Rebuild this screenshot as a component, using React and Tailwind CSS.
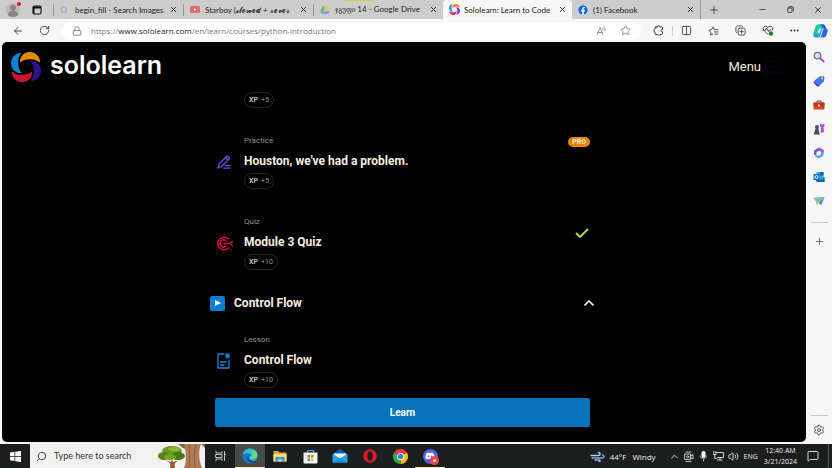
import React from "react";
import {
  ArrowLeft, RotateCw, Lock, Star, X, Plus, Minus, Search, Settings,
  ChevronUp, MessageSquare, Columns2, Volume2, Ellipsis,
} from "lucide-react";
import { FaFacebook, FaDiscord } from "react-icons/fa";

/* ---------- logos ---------- */

const SWIRL = "M9 10.8C8.6 4.5 13 0 18.6 0 25 0 29.4 5 29 10.6 26 7.8 22.6 6.900 18.4 7.200 14 7.300 11 8.600 9 10.8Z";

function SololearnMark({ className, colors }) {
  return (
    <svg viewBox="0 0 30 30" className={className} aria-hidden="true">
      <path d={SWIRL} fill={colors[0]} />
      <path d={SWIRL} fill={colors[1]} transform="rotate(90 15 15)" />
      <path d={SWIRL} fill={colors[2]} transform="rotate(180 15 15)" />
      <path d={SWIRL} fill={colors[3]} transform="rotate(270 15 15)" />
    </svg>
  );
}

function DriveLogo() {
  return (
    <svg viewBox="0 0 24 22" className="h-[9px] w-[10px] opacity-60" aria-hidden="true">
      <path d="M8 1h8l8 14h-8z" fill="#fbbc04" />
      <path d="M8 1l4 7L4 22l-4-7z" fill="#34a853" />
      <path d="M8 15h16l-4 7H4z" fill="#4285f4" />
    </svg>
  );
}

function YoutubeLogo() {
  return (
    <svg viewBox="0 0 20 14" className="h-[7px] w-[10px]" aria-hidden="true">
      <rect width="20" height="14" rx="3" fill="#e56a6a" />
      <path d="M8 4l5 3-5 3z" fill="#fff" />
    </svg>
  );
}

function EdgeLogo() {
  return (
    <svg viewBox="0 0 32 32" className="size-4" aria-hidden="true">
      <defs>
        <linearGradient id="edgeTop" x1="0" y1="0" x2="1" y2="0.4">
          <stop offset="0" stopColor="#28a8e8" />
          <stop offset="0.6" stopColor="#35c7c0" />
          <stop offset="1" stopColor="#6ee06a" />
        </linearGradient>
      </defs>
      <circle cx="16" cy="16" r="15" fill="#1678cf" />
      <path d="M1 15C2 6 8 1 16 1c9 0 15 6 15 13 0 5-4 8-9 8-4 0-5-2-4-3 2-2 2-7-4-8C8 10 3 12 1 15z" fill="url(#edgeTop)" />
      <path d="M13 14c-5 4-3 12 3 15 5 2 10 0 13-5-5 3-13 2-15-3-1-3 0-5-1-7z" fill="#0c4f97" />
      <path d="M19 18c-1 4 5 6 10 4l-1 2c-6 3-13 1-14-4 0-3 2-5 4-5 1 1 1 2 1 3z" fill="#dff2ff" fillOpacity="0.35" />
    </svg>
  );
}

function CopilotLogo() {
  return (
    <svg viewBox="0 0 30 28" className="h-[14px] w-[15px]" aria-hidden="true">
      <path d="M11 1h9c3 0 4 2 5 5l1 3h-7l-4 14c-1 3-3 4-5 4H6c-5 0-6-4-5-8l4-13c1-3 3-5 6-5z" fill="#17a9c9" />
      <path d="M11 1h9c2 0 3 1 4 3l-6 2-5 12-8 2-3-4 3-10c1-3 3-5 6-5z" fill="#25c7ad" />
      <path d="M22 8h3c4 0 5 4 4 8l-3 8c-1 2-3 3-5 3h-8c2 0 3-2 4-4l3-11c1-2 1-4 2-4z" fill="#2f64e8" />
      <path d="M12 9h4l-3 10h-4z" fill="#fff" fillOpacity="0.85" />
      <path d="M13 1h7c3 0 4 2 5 5l1 2h-4c-2 0-3-2-4-4z" fill="#1460c8" />
    </svg>
  );
}

/* ---------- browser toolbar icons ---------- */

const stroke = { fill: "none", stroke: "currentColor", strokeLinecap: "round", strokeLinejoin: "round" };

function ReadAloudIcon() {
  return (
    <svg viewBox="0 0 22 20" className="h-[10px] w-[11px]" strokeWidth="1.6" {...stroke} aria-hidden="true">
      <path d="M2 18L8 3l6 15M4 13h8M13 4c1 1 1.500 2.500 1 4M16 1.500c2 2 2.500 5 1.500 8" />
    </svg>
  );
}
function ExtensionsIcon() {
  return (
    <svg viewBox="0 0 22 22" className="size-[11px]" strokeWidth="1.900" {...stroke} aria-hidden="true">
      <path d="M6 4h3c0-3.500 5-3.500 5 0h3c1.500 0 2 .5 2 2v3c-4-.5-4 5 0 4.500v3.500c0 1.500-.5 2-2 2h-3c0 2-5 2-5 0H6c-1.500 0-2-.5-2-2v-3c-3.500 0-3.500-5 0-5V6c0-1.500.5-2 2-2z" />
    </svg>
  );
}
function FavoritesIcon() {
  return (
    <svg viewBox="0 0 24 22" className="h-[10px] w-[11px]" strokeWidth="1.800" {...stroke} aria-hidden="true">
      <path d="M14 8l-3-6-3 6-6 1 4.500 5L5.500 20l5-2.500M15 8h7M14 13h8M15 18h7" />
    </svg>
  );
}
function CollectionsIcon() {
  return (
    <svg viewBox="0 0 24 24" className="size-[11px]" strokeWidth="1.800" {...stroke} aria-hidden="true">
      <rect x="7" y="7" width="15" height="15" rx="3" />
      <path d="M4 17c-2-1-2-2-2-4V7c0-3 2-5 5-5h6c2 0 3 0 4 2M14.500 11v7M11 14.500h7" />
    </svg>
  );
}
function HealthIcon() {
  return (
    <svg viewBox="0 0 24 22" className="h-[11px] w-3" strokeWidth="1.800" {...stroke} aria-hidden="true">
      <path d="M12 19l-9-9c-3-5 4-11 9-5 5-6 12 0 9 5M2 10h5l2-4 4 7 2-3h3" />
      <circle cx="18" cy="17" r="4.500" fill="#1c8a2c" stroke="none" />
    </svg>
  );
}
function RestoreIcon() {
  return (
    <svg viewBox="0 0 16 16" className="size-[7px]" strokeWidth="1.800" {...stroke} aria-hidden="true">
      <rect x="1.500" y="4.500" width="10" height="10" rx="2" />
      <path d="M5 1.500h6.500a3 3 0 0 1 3 3V11" />
    </svg>
  );
}

/* ---------- sidebar icons ---------- */

const sideIcons = [
  ["Search", <svg viewBox="0 0 24 24" className="size-3"><circle cx="9" cy="9" r="6.500" fill="#c9e4f5" stroke="#6b7580" strokeWidth="2.500" /><path d="M14 14l7 7" stroke="#b13ee0" strokeWidth="4" strokeLinecap="round" /></svg>],
  ["Shopping", <svg viewBox="0 0 24 24" className="size-3"><path d="M13 3l8-1 2 3-1 8-10 9c-1 1-3 1-4 0l-6-6c-1-1-1-3 0-4z" fill="#4a72ee" /><path d="M3 15l10 6-1 1c-1 1-3 1-4 0l-6-6z" fill="#2b3fc0" /><circle cx="18" cy="6.500" r="2" fill="#ffd34a" /></svg>],
  ["Tools", <svg viewBox="0 0 24 24" className="size-3"><path d="M8 7V4h8v3" fill="none" stroke="#7a3b22" strokeWidth="2" /><rect x="1" y="7" width="22" height="14" rx="2" fill="#d2461f" /><path d="M1 13h22v-4c0-1-1-2-2-2H3c-1 0-2 1-2 2z" fill="#b5391d" /><rect x="10" y="11" width="4" height="4" fill="#ffd9b0" /></svg>],
  ["Games", <svg viewBox="0 0 24 24" className="size-3"><path d="M14 2h3v2h2V2h4v4l-2 2 1 11h-7l1-11-2-2z" fill="#b44be8" /><circle cx="8" cy="8" r="4" fill="#555" /><path d="M5 11h6l1 7 2 5H1l2-5z" fill="#4a4a4a" /></svg>],
  ["Microsoft 365", <svg viewBox="0 0 24 24" className="size-3"><path d="M12 1l9 5v6l-6-3-3-2-5 3v8l-5-3V7z" fill="#5b63d8" /><path d="M21 6v11l-9 6-9-5 9-1 4-3V9z" fill="#4aa3e8" /><path d="M12 1l9 5v5l-7-3-7 3z" fill="#9a5fdc" /><circle cx="12" cy="12" r="4" fill="#f2f4ff" /></svg>],
  ["Outlook", <svg viewBox="0 0 24 24" className="size-3"><path d="M7 2h14v9l2 2v9H7z" fill="#2fa8ea" /><path d="M14 2h7v7h-7zM7 13l8 5 8-5v9H7z" fill="#1266b8" /><rect x="1" y="6" width="12" height="12" rx="1" fill="#0b6fc8" /><circle cx="7" cy="12" r="3" fill="none" stroke="#fff" strokeWidth="2" /></svg>],
  ["Drop", <svg viewBox="0 0 24 24" className="size-3"><path d="M1 6l22-2-6 16-6-4-3 4-1-7z" fill="#2b9be6" /><path d="M1 6l22-2L7 13z" fill="#67c3f5" /><path d="M7 13L23 4 11 16l-3 4z" fill="#f2b530" /></svg>],
];

/* ---------- course icons ---------- */

function PracticeIcon() {
  return (
    <svg viewBox="0 0 28 28" className="size-[14px] text-[#7a4be0]" strokeWidth="2.500" {...stroke} aria-hidden="true">
      <path d="M2 26l2-8L19 3c1-1 2-1 3 0l2 2c1 1 1 2 0 3L9 23zM17 5l5 5M16 21h10M13 26h13" />
    </svg>
  );
}
function QuizIcon() {
  return (
    <svg viewBox="0 0 32 30" className="h-[15px] w-4 text-[#e0004f]" strokeWidth="2.800" {...stroke} aria-hidden="true">
      <path d="M23 6a12.500 12.500 0 1 0 0 18M18 10a7 7 0 1 0 0 10M14 15h12M31 11l-5 4 5 4" />
    </svg>
  );
}
function LessonIcon() {
  return (
    <svg viewBox="0 0 26 32" className="h-4 w-[13px] text-[#1489dc]" strokeWidth="2.600" {...stroke} aria-hidden="true">
      <path d="M14 2H2v28h22V15M7 18h11M7 24h7" />
      <path d="M17 1h8v11l-4-3-4 3z" fill="currentColor" stroke="none" />
    </svg>
  );
}

/* ---------- browser chrome ---------- */

function Tab({ icon, title, active, last }) {
  return (
    <div
      className={
        "flex h-full min-w-0 max-w-[129px] flex-1 items-center pl-[6px] " +
        (active ? "rounded-t-[4px] bg-[#f7f7f7]" : last ? "border-r border-[#999]" : "")
      }
    >
      <span className="flex w-[15px] shrink-0 items-center">{icon}</span>
      <span className="min-w-0 flex-1 overflow-hidden whitespace-nowrap font-['Lato','DejaVu_Sans',sans-serif] text-[8px] leading-3 text-[#222]">
        {title}
      </span>
      <button aria-label="Close tab" className="flex w-[19px] shrink-0 justify-center text-[#222]">
        <X className="size-[9px]" strokeWidth={2.4} />
      </button>
    </div>
  );
}

function Divider() {
  return <span className="h-3 w-px shrink-0 bg-[#999]" />;
}

function TabStrip() {
  return (
    <div className="relative flex h-[19px] shrink-0 items-center bg-[#cdcdcd]">
      <button aria-label="Profile" className="relative flex w-[26px] justify-center">
        <svg viewBox="0 0 24 24" className="size-[14px]" aria-hidden="true">
          <circle cx="12" cy="12" r="12" fill="#bdb9b6" />
          <circle cx="12" cy="8" r="5" fill="#8b8480" />
          <path d="M3 20c1-9 17-9 18 0-4 5-14 5-18 0z" fill="#8b8480" />
        </svg>
        <span className="absolute -top-px right-[5px] size-1 rounded-full bg-[#e3151f]" />
      </button>
      <button aria-label="Tab actions" className="flex w-[22px] justify-center text-[#111]">
        <svg viewBox="0 0 20 20" className="size-[10px]" aria-hidden="true">
          <rect x="2" y="2" width="16" height="16" rx="2.500" fill="none" stroke="currentColor" strokeWidth="2.200" />
          <path d="M2 3h16v4H2zM2 7h3v10H2z" fill="currentColor" />
        </svg>
      </button>
      <span className="w-[5px]" />
      <Divider />
      <div className="flex h-full min-w-0 max-w-[647px] flex-1 items-center">
        <Tab icon={<Search className="size-[8px] text-[#6fa8d8]" strokeWidth={2.4} />} title="begin_fill - Search Images" />
        <Divider />
        <Tab icon={<YoutubeLogo />} title={<>Starboy (<span>𝓼𝓵𝓸𝔀𝓮𝓭 + 𝓻𝓮𝓿𝓮𝓻</span></>} />
        <Divider />
        <div className="relative flex h-full min-w-0 max-w-[129px] flex-1">
          <span className="absolute left-[30px] top-0 h-px w-[29px] bg-[#d8cc5c]" />
          <Tab icon={<DriveLogo />} title={<><span lang="ka" className="font-['DejaVu_Sans'] text-[7px]">ჯგუფი</span> 14 - Google Drive</>} />
        </div>
        <Tab active icon={<SololearnMark className="size-[11px]" colors={["#ff7a1a", "#7b2ff0", "#ec1c6b", "#1a9df0"]} />} title="Sololearn: Learn to Code" />
        <Tab last icon={<FaFacebook className="size-[10px] rounded-full bg-white text-[#0866ff]" />} title="(1) Facebook" />
      </div>
      <button aria-label="New tab" className="flex w-[26px] justify-center text-[#333]"><Plus className="size-3" strokeWidth={1.6} /></button>
      <div className="ml-auto flex text-[#222]">
        <button aria-label="Minimize" className="flex w-7 items-center justify-center"><Minus className="size-[9px]" /></button>
        <button aria-label="Restore" className="flex w-7 items-center justify-center"><RestoreIcon /></button>
        <button aria-label="Close" className="flex w-7 items-center justify-center"><X className="size-[10px]" /></button>
      </div>
    </div>
  );
}

function ToolButton({ label, children }) {
  return (
    <button aria-label={label} className="flex w-[27px] shrink-0 items-center justify-center text-[#333]">
      {children}
    </button>
  );
}

function Toolbar() {
  return (
    <div className="flex h-[23px] shrink-0 items-center bg-[#f7f7f7] pl-1">
      <ToolButton label="Back"><ArrowLeft className="size-3" strokeWidth={1.8} /></ToolButton>
      <ToolButton label="Refresh"><RotateCw className="size-[11px]" strokeWidth={1.8} /></ToolButton>
      <div className="ml-[3px] mr-1 flex h-[18px] min-w-0 flex-1 items-center rounded-full bg-white pl-[11px] pr-[10px]">
        <Lock className="size-[10px] shrink-0 text-[#666]" strokeWidth={1.8} />
        <div className="ml-[9px] min-w-0 flex-1 overflow-hidden whitespace-nowrap text-[8px] leading-3 text-[#767676]">
          https://<span className="text-[#222]">www.sololearn.com</span>/en/learn/courses/python-introduction
        </div>
        <div className="flex items-center gap-[13px] text-[#777]">
          <button aria-label="Read aloud"><ReadAloudIcon /></button>
          <button aria-label="Add to favorites"><Star className="size-[11px]" strokeWidth={1.8} /></button>
        </div>
      </div>
      <ToolButton label="Extensions"><ExtensionsIcon /></ToolButton>
      <span className="h-[10px] w-px bg-[#ccc]" />
      <ToolButton label="Split screen"><Columns2 className="size-[11px]" strokeWidth={1.8} /></ToolButton>
      <ToolButton label="Favorites"><FavoritesIcon /></ToolButton>
      <ToolButton label="Collections"><CollectionsIcon /></ToolButton>
      <ToolButton label="Browser essentials"><HealthIcon /></ToolButton>
      <ToolButton label="Settings and more"><Ellipsis className="size-[11px]" strokeWidth={2.2} /></ToolButton>
      <button aria-label="Copilot" className="flex w-6 shrink-0 items-center justify-center"><CopilotLogo /></button>
    </div>
  );
}

function Sidebar() {
  return (
    <aside className="flex w-[26px] shrink-0 flex-col items-center pb-[6px] pt-[9px] text-[#444]">
      <div className="flex flex-col gap-[12px]">
        {sideIcons.map(([label, icon]) => (
          <button key={label} aria-label={label} className="block">{icon}</button>
        ))}
      </div>
      <span className="mt-[15px] h-px w-[17px] bg-[#c8c8c8]" />
      <button aria-label="Customize" className="mt-[13px]"><Plus className="size-[11px]" strokeWidth={1.6} /></button>
      <span className="mt-auto h-px w-[17px] bg-[#c8c8c8]" />
      <button aria-label="Settings" className="mt-2"><Settings className="size-3" strokeWidth={1.8} /></button>
    </aside>
  );
}

/* ---------- course page ---------- */

function Xp({ amount }) {
  return (
    <span className="inline-flex h-4 items-center gap-[3px] rounded-full border border-[#242424] px-1 text-[7px] leading-3 text-[#a89c84]">
      <b className="font-bold text-[#c4b79c]">XP</b>+{amount}
    </span>
  );
}

function CourseItem({ icon, kind, title, xp, badge }) {
  return (
    <li className="flex">
      <span className="flex w-[29px] shrink-0 items-center pl-[2px]">{icon}</span>
      <div className="min-w-0 flex-1">
        <p className="text-[8px] leading-3 text-[#9c8f79]">{kind}</p>
        <h3 className="mt-1 text-[12px] font-bold leading-5 text-[#f6eedf]">{title}</h3>
        <div className="mt-[2px] flex"><Xp amount={xp} /></div>
      </div>
      {badge}
    </li>
  );
}

function CoursePage() {
  return (
    <main className="flex min-w-0 flex-1 flex-col overflow-hidden rounded-[5px] bg-black font-['Roboto','Noto_Sans',sans-serif]">
      <header className="flex h-[50px] shrink-0 items-center pl-[9px] pr-[23px]">
        <a href="#home" className="flex items-center gap-[9px] text-white">
          <SololearnMark className="size-[30px]" colors={["#e88a00", "#2f0f92", "#d1122f", "#0c86d4"]} />
          <span className="pb-1 font-['Inter',sans-serif] text-[25px] font-semibold leading-7">sololearn</span>
        </a>
        <button className="ml-auto flex items-center gap-1 text-[13px] leading-4 text-[#f4ead8]">
          Menu
          <svg viewBox="0 0 18 14" className="h-[14px] w-[18px]" aria-hidden="true">
            <path d="M0 1h18M0 7h18M0 13h18" stroke="#020b1c" strokeWidth="1.500" />
          </svg>
        </button>
      </header>
      <div className="flex flex-1 flex-col pr-[3px]">
        <div className="mx-auto flex w-full max-w-[375px] flex-1 flex-col">
          <div className="flex pl-[29px]"><Xp amount={5} /></div>
          <ul className="mt-[27px] flex flex-col gap-[27px]">
            <CourseItem
              icon={<PracticeIcon />} kind="Practice" title="Houston, we've had a problem." xp={5}
              badge={<span className="mt-[2px] h-[10px] self-start rounded-full bg-[#e88400] px-1 text-[7px] font-bold leading-[10px] text-[#fdebd0]">PRO</span>}
            />
            <CourseItem
              icon={<QuizIcon />} kind="Quiz" title="Module 3 Quiz" xp={10}
              badge={
                <svg viewBox="0 0 14 10" className="mr-px mt-3 h-[10px] w-[14px]" aria-label="Completed">
                  <path d="M1 5l4 4 8-8" fill="none" stroke="#a6e043" strokeWidth="1.900" />
                </svg>
              }
            />
          </ul>
          <button className="-ml-[5px] -mr-[5px] mt-[23px] flex h-5 items-center text-left text-[#f6eedf]">
            <span className="flex size-[15px] items-center justify-center rounded-[2px] bg-[#0a80d2]">
              <svg viewBox="0 0 6 6" className="size-[6px]" aria-hidden="true"><path d="M0 0l6 3-6 3z" fill="#fff" /></svg>
            </span>
            <span className="ml-[9px] text-[12px] font-bold leading-5">Control Flow</span>
            <svg viewBox="0 0 10 6" className="ml-auto mr-px h-[6px] w-[10px]" aria-hidden="true">
              <path d="M0.500 5.500L5 1l4.500 4.500" fill="none" stroke="#f6eedf" strokeWidth="1.600" />
            </svg>
          </button>
          <ul className="mt-[21px]">
            <CourseItem icon={<LessonIcon />} kind="Lesson" title="Control Flow" xp={10} />
          </ul>
          <button className="mb-[14px] mt-[10px] h-[29px] rounded-[2px] bg-[#0673bb] text-[10px] font-bold text-white">Learn</button>
        </div>
      </div>
    </main>
  );
}

/* ---------- taskbar ---------- */

function TreeArt() {
  return (
    <svg viewBox="0 0 47 24" className="h-6 w-[47px] shrink-0" aria-hidden="true">
      <path d="M20 0c3 2 4 4 7 5l0-5zM43 0l4 4V0z" fill="#8e5b3c" />
      <path d="M26 24c3-8 2-16 0-24h17c-3 8-2 16 1 24z" fill="#b07a54" />
      <path d="M31 24c1-8 1-16 0-24M37 24c-1-9-1-16 1-24" fill="none" stroke="#8d6040" strokeWidth="1" />
      <path d="M12 24c1-4 0-6-5-8l6 2 1-3 1 3 7-2c-5 2-6 4-5 8z" fill="#9a5a34" />
      <ellipse cx="14" cy="7" rx="10" ry="5" fill="#6c9a22" />
      <ellipse cx="6" cy="12" rx="6" ry="4" fill="#58831a" />
      <ellipse cx="20" cy="12" rx="7" ry="4" fill="#4c7515" />
      <ellipse cx="12" cy="13" rx="6" ry="3" fill="#72a524" />
      <ellipse cx="16" cy="5" rx="6" ry="2" fill="#8bbb35" />
    </svg>
  );
}

function OperaLogo() {
  return (
    <svg viewBox="0 0 28 28" className="size-[14px]" aria-hidden="true">
      <circle cx="14" cy="14" r="13.500" fill="#e0162b" />
      <ellipse cx="14" cy="14" rx="5.500" ry="9.500" fill="#1c1f1e" />
    </svg>
  );
}
function ChromeLogo() {
  return (
    <svg viewBox="0 0 30 30" className="size-[15px]" aria-hidden="true">
      <path d="M15 15L2 7.500A15 15 0 0 1 28 7.500z" fill="#e33b2e" />
      <path d="M15 15L28 7.500A15 15 0 0 1 15 30z" fill="#fbc116" />
      <path d="M15 15V30A15 15 0 0 1 2 7.500z" fill="#2da94f" />
      <circle cx="15" cy="15" r="7" fill="#fff" />
      <circle cx="15" cy="15" r="5.500" fill="#3b7de9" />
    </svg>
  );
}
function ExplorerLogo() {
  return (
    <svg viewBox="0 0 28 26" className="h-[13px] w-[14px]" aria-hidden="true">
      <path d="M1 2h9l3 3h14v18H1z" fill="#e5a93a" />
      <path d="M1 8h26v15H1z" fill="#ffdc7a" />
      <path d="M5 14h18v10h-5v-5h-8v5H5z" fill="#3f9ee0" />
    </svg>
  );
}
function StoreLogo() {
  return (
    <svg viewBox="0 0 30 30" className="size-[15px]" aria-hidden="true">
      <path d="M9 8V3h12v5" fill="none" stroke="#2aa7e6" strokeWidth="2.500" />
      <path d="M1 7h28v19c0 2-1 3-3 3H4c-2 0-3-1-3-3z" fill="#f4f4f4" />
      <path d="M9 12h5v5H9z" fill="#f25022" /><path d="M16 12h5v5h-5z" fill="#7fba00" />
      <path d="M9 19h5v5H9z" fill="#00a4ef" /><path d="M16 19h5v5h-5z" fill="#ffb900" />
    </svg>
  );
}
function MailLogo() {
  return (
    <svg viewBox="0 0 32 28" className="h-[14px] w-4" aria-hidden="true">
      <path d="M1 10L16 0l15 10v5H1z" fill="#1263b0" />
      <path d="M4 9h24v3L16 20 4 12z" fill="#e9f4fb" />
      <path d="M1 10l15 9 15-9v17H1z" fill="#2ba4e8" />
      <path d="M1 27l15-9 15 9z" fill="#1f8fda" />
    </svg>
  );
}
function DiscordLogo() {
  return (
    <span className="relative flex size-[15px] items-center justify-center rounded-full bg-[#5563e8]">
      <FaDiscord className="size-[10px] text-white" />
      <span className="absolute -bottom-px -right-px flex size-[9px] items-center justify-center rounded-full bg-[#e8414a]">
        <span className="size-[3px] rounded-full bg-white" />
      </span>
    </span>
  );
}

function TaskButton({ label, children, active, running }) {
  return (
    <button
      aria-label={label}
      className={
        "flex h-full w-[30px] shrink-0 items-center justify-center border-b pt-px " +
        (active ? "border-[#f4edb0] bg-[#474a49]" : running ? "border-[#f4edb0]" : "border-transparent")
      }
    >
      {children}
    </button>
  );
}

function Taskbar() {
  return (
    <footer className="flex h-6 shrink-0 items-center bg-[#1b1e1d] text-[#eee]">
      <button aria-label="Start" className="flex w-[30px] shrink-0 justify-center">
        <svg viewBox="0 0 22 22" className="size-[11px]" fill="#fff" aria-hidden="true">
          <path d="M0 3l9-1.300V10H0zM10.500 1.500L22 0v10H10.500zM0 11.500h9v8.300L0 18.500zM10.500 11.500H22V22l-11.500-1.500z" />
        </svg>
      </button>
      <div className="flex h-full w-[175px] items-center bg-[#f1f1f1] pl-[6px]">
        <Search className="size-[11px] shrink-0 -scale-x-100 text-[#333]" strokeWidth={2} />
        <input
          aria-label="Type here to search"
          placeholder="Type here to search"
          className="ml-[7px] min-w-0 flex-1 bg-transparent font-['Lato',sans-serif] text-[9px] leading-4 outline-none placeholder:text-[#333]"
        />
        <TreeArt />
      </div>
      <TaskButton label="Task view">
        <svg viewBox="0 0 22 20" className="h-[10px] w-[11px]" strokeWidth="1.600" {...stroke} aria-hidden="true">
          <path d="M2 1v3h12V1M2 19v-3h12v3M2 7h12v6H2zM19 1v18M19 7h2" />
        </svg>
      </TaskButton>
      <TaskButton label="Microsoft Edge" active><EdgeLogo /></TaskButton>
      <TaskButton label="File Explorer"><ExplorerLogo /></TaskButton>
      <TaskButton label="Microsoft Store"><StoreLogo /></TaskButton>
      <TaskButton label="Mail"><MailLogo /></TaskButton>
      <TaskButton label="Opera"><OperaLogo /></TaskButton>
      <TaskButton label="Chrome"><ChromeLogo /></TaskButton>
      <TaskButton label="Discord" running><DiscordLogo /></TaskButton>

      <div className="ml-auto flex h-full items-center whitespace-nowrap text-[8px] leading-[11px]">
        <svg viewBox="0 0 30 22" className="h-[11px] w-[15px]" fill="none" strokeLinecap="round" strokeWidth="3" aria-hidden="true">
          <path d="M2 9h15c4 0 4-6 0-6" stroke="#a9c8ee" />
          <path d="M4 14h20c5 0 5-6 1-6" stroke="#7fa8dc" />
          <path d="M10 18h8c3 0 3 3 0 3" stroke="#8fb4e2" />
        </svg>
        <span className="ml-[5px]">44°F</span>
        <span className="ml-[6px]">Windy</span>
        <div className="ml-[13px] flex items-center gap-1">
          <ChevronUp className="size-[11px]" />
          <svg viewBox="0 0 20 22" className="h-[11px] w-[10px]" strokeWidth="1.600" {...stroke} aria-hidden="true">
            <path d="M4 2h10M2 6h11v11H2zM13 10l5-3v9l-5-3M4 21h10" /><circle cx="7.500" cy="11.500" r="2" />
          </svg>
          <svg viewBox="0 0 20 22" className="h-[11px] w-[11px]" aria-hidden="true">
            <rect x="6" y="0" width="8" height="14" rx="4" fill="#fff" />
            <path d="M4 9c0 9 12 9 12 0M10 16v5" fill="none" stroke="#ccc" strokeWidth="1.600" />
          </svg>
          <svg viewBox="0 0 22 20" className="h-[10px] w-[11px]" strokeWidth="1.700" {...stroke} aria-hidden="true">
            <path d="M7 3h14v10H9M14 13v5M9 18h9M1 2h5v5H1zM3.500 7v8H7" />
          </svg>
          <Volume2 className="size-[11px]" />
        </div>
        <span className="ml-[5px] text-[7px]">ENG</span>
        <div className="ml-[6px] text-center text-[7px]">
          <div>12:40 AM</div>
          <div>3/21/2024</div>
        </div>
        <MessageSquare className="ml-[10px] size-3" strokeWidth={1.800} />
        <span className="ml-[9px] mr-[3px] h-full w-px bg-[#555]" />
      </div>
    </footer>
  );
}

export default function App() {
  return (
    <div className="flex h-screen min-w-0 flex-col overflow-hidden bg-[#f7f7f7] font-['Open_Sans','Noto_Sans','DejaVu_Sans',sans-serif]">
      <TabStrip />
      <Toolbar />
      <div className="flex min-h-0 flex-1 pb-[2px] pl-[2px]">
        <CoursePage />
        <Sidebar />
      </div>
      <Taskbar />
    </div>
  );
}
